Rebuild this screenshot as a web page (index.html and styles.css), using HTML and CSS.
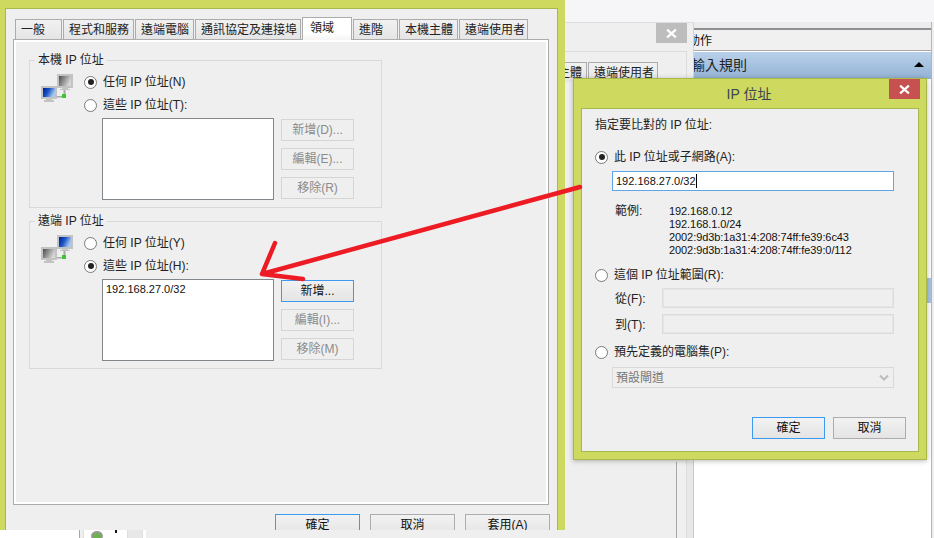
FILE: index.html
```html
<!DOCTYPE html>
<html lang="zh-Hant">
<head>
<meta charset="utf-8">
<title>IP 位址</title>
<link rel="stylesheet" href="styles.css">
</head>
<body>
<div class="desk">
  <div class="topband"></div>

  <div class="peek">
    <div class="peek-white"></div>
    <div class="peek-list"><span class="peek-dot"></span><span class="peek-tick"></span></div>
    <div class="peek-gutter"></div>
    <div class="peek-white2"></div>
  </div>

  <div class="splitter"><div class="split-a"></div><div class="split-b"></div></div>

  <aside class="actions">
    <div class="act-strip"></div>
    <div class="act-head"><span class="act-head-text">動作</span></div>
    <div class="act-sect"><span class="act-sect-text">輸入規則</span><span class="act-tri"></span></div>
    <div class="act-body"><div class="act-thumb"></div></div>
  </aside>

  <section class="midwin">
    <div class="mid-title"><span class="mid-close"><svg class="x-icon" viewBox="0 0 10 10"><path d="M1 1.5 9 8.5M9 1.5 1 8.5"/></svg></span></div>
    <div class="mid-client">
      <div class="mid-tabs">
        <div class="tab mid-tab1">本機主體</div>
        <div class="tab mid-tab2">遠端使用者</div>
      </div>
    </div>
  </section>

  <section class="mainwin">
    <div class="main-client">
      <div class="tabs">
        <div class="tab">一般</div>
        <div class="tab">程式和服務</div>
        <div class="tab">遠端電腦</div>
        <div class="tab">通訊協定及連接埠</div>
        <div class="tab tab-on">領域</div>
        <div class="tab">進階</div>
        <div class="tab">本機主體</div>
        <div class="tab">遠端使用者</div>
      </div>
      <div class="pane">
        <fieldset class="group">
          <legend class="legend">本機 IP 位址</legend>
          <div class="group-row">
            <svg class="net" viewBox="0 0 32 30">
              <defs>
                <linearGradient id="grad-gray" x1="0" y1="0" x2="1" y2="0.4"><stop offset="0" stop-color="#4c4c4c"/><stop offset="1" stop-color="#d6d6d6"/></linearGradient>
                <linearGradient id="grad-blue" x1="0" y1="0" x2="1" y2="0.4"><stop offset="0" stop-color="#001c96"/><stop offset="0.5" stop-color="#1b55c4"/><stop offset="1" stop-color="#a9c6ee"/></linearGradient>
              </defs>
              <rect class="frame" x="16" y="0" width="16" height="14"/><rect class="scr-gray" x="18" y="2" width="12" height="10"/>
              <rect class="frame" x="21" y="14" width="6" height="1"/><rect class="frame" x="19" y="15" width="10" height="1"/>
              <rect class="wire" x="22.5" y="16" width="2" height="5"/><rect class="wire" x="16" y="22" width="6" height="1.5"/>
              <rect class="frame" x="0" y="12" width="16" height="13"/><rect class="scr-blue" x="2" y="14" width="12" height="9"/>
              <rect class="frame" x="5" y="25" width="6" height="1"/><rect class="frame" x="3" y="26" width="10" height="2"/>
              <rect class="led" x="21" y="20" width="4" height="4"/>
            </svg>
            <div class="opts">
              <div class="radio-row"><span class="radio radio-on"></span><span>任何 IP 位址(N)</span></div>
              <div class="radio-row"><span class="radio"></span><span>這些 IP 位址(T):</span></div>
              <div class="list-row">
                <div class="listbox"></div>
                <div class="btn-col">
                  <div class="btn btn-off">新增(D)...</div>
                  <div class="btn btn-off">編輯(E)...</div>
                  <div class="btn btn-off">移除(R)</div>
                </div>
              </div>
            </div>
          </div>
        </fieldset>
        <fieldset class="group group-remote">
          <legend class="legend">遠端 IP 位址</legend>
          <div class="group-row">
            <svg class="net" viewBox="0 0 32 30">
              <rect class="frame" x="16" y="0" width="16" height="14"/><rect class="scr-blue" x="18" y="2" width="12" height="10"/>
              <rect class="frame" x="21" y="14" width="6" height="1"/><rect class="frame" x="19" y="15" width="10" height="1"/>
              <rect class="wire" x="22.5" y="16" width="2" height="5"/><rect class="wire" x="16" y="22" width="6" height="1.5"/>
              <rect class="frame" x="0" y="12" width="16" height="13"/><rect class="scr-gray" x="2" y="14" width="12" height="9"/>
              <rect class="frame" x="5" y="25" width="6" height="1"/><rect class="frame" x="3" y="26" width="10" height="2"/>
              <rect class="led" x="21" y="20" width="4" height="4"/>
            </svg>
            <div class="opts">
              <div class="radio-row"><span class="radio"></span><span>任何 IP 位址(Y)</span></div>
              <div class="radio-row"><span class="radio radio-on"></span><span>這些 IP 位址(H):</span></div>
              <div class="list-row">
                <div class="listbox"><span class="ip-text">192.168.27.0/32</span></div>
                <div class="btn-col">
                  <div class="btn btn-focus">新增...</div>
                  <div class="btn btn-off">編輯(I)...</div>
                  <div class="btn btn-off">移除(M)</div>
                </div>
              </div>
            </div>
          </div>
        </fieldset>
      </div>
      <div class="main-actions">
        <div class="btn btn-w85 btn-focus">確定</div>
        <div class="btn btn-w85 btn-norm">取消</div>
        <div class="btn btn-w85 btn-norm">套用(A)</div>
      </div>
    </div>
  </section>

  <section class="ipwin">
    <header class="ip-title"><span>IP 位址</span><span class="ip-close"><svg class="x-icon" viewBox="0 0 10 10"><path d="M1 1.5 9 8.5M9 1.5 1 8.5"/></svg></span></header>
    <div class="ip-client">
      <div class="ip-lead">指定要比對的 IP 位址:</div>
      <div class="radio-row r-first"><span class="radio radio-on"></span><span>此 IP 位址或子網路(A):</span></div>
      <div class="ip-input"><span class="ip-text">192.168.27.0/32</span><span class="caret"></span></div>
      <div class="examples">
        <div class="ex-label">範例:</div>
        <div class="ex-list ip-text">
          <div>192.168.0.12</div>
          <div>192.168.1.0/24</div>
          <div>2002:9d3b:1a31:4:208:74ff:fe39:6c43</div>
          <div>2002:9d3b:1a31:4:208:74ff:fe39:0/112</div>
        </div>
      </div>
      <div class="radio-row r-range"><span class="radio"></span><span>這個 IP 位址範圍(R):</span></div>
      <div class="range-row"><span class="range-label">從(F):</span><span class="range-input"></span></div>
      <div class="range-row"><span class="range-label">到(T):</span><span class="range-input"></span></div>
      <div class="radio-row r-pre"><span class="radio"></span><span>預先定義的電腦集(P):</span></div>
      <div class="select"><span>預設閘道</span><svg class="chev" viewBox="0 0 10 8"><path d="M1 1.5 5 5.5 9 1.5"/></svg></div>
      <div class="ip-actions">
        <div class="btn btn-focus">確定</div>
        <div class="btn btn-norm">取消</div>
      </div>
    </div>
  </section>

  <svg class="arrow" viewBox="0 0 934 538">
    <path d="M580 187 262 274M275 243 262 274 303 279"/>
  </svg>
</div>
</body>
</html>
```
FILE: styles.css
```css
* { box-sizing: border-box; }
html, body { margin: 0; padding: 0; }
body { background: #efefef; }
.desk {
  position: relative;
  width: 934px;
  height: 538px;
  overflow: hidden;
  background: #efefef;
  font: 12px/16px "Liberation Sans", "Noto Sans CJK TC", sans-serif;
  color: #111;
}

/* background strips */
.topband { position: absolute; left: 565px; top: 0; width: 369px; height: 22px; background: #f6f6f8; }
.peek { position: absolute; left: 0; top: 530px; width: 146px; height: 8px; display: flex; }
.peek-white { width: 80px; background: #fff; border-right: 1px solid #a8a8a8; }
.peek-list { background: #fff; border-left: 1px solid #ddd; margin-left: 3px; position: relative; overflow: hidden; width: 44px; }
.peek-dot { position: absolute; left: 7px; top: 1px; width: 12px; height: 10px; border-radius: 50%; background: #6bb34a; border: 2px solid #999; }
.peek-tick { position: absolute; left: 31px; top: 0; width: 2px; height: 3px; background: #111; }
.peek-gutter { width: 16px; background: #e8e8e8; border-left: 1px solid #ddd; border-right: 1px solid #ddd; }
.peek-white2 { width: 3px; background: #fff; }

.splitter { position: absolute; left: 676px; top: 450px; width: 18px; height: 88px; display: flex; }
.split-a { width: 10px; background: #f0f0f0; border-left: 1px solid #a8a8a8; }
.split-b { width: 8px; background: #e8e8e8; border-left: 1px solid #dcdcdc; border-right: 1px solid #c8c8c8; }

/* actions pane */
.actions { position: absolute; left: 694px; top: 22px; width: 238px; height: 516px; display: flex; flex-direction: column; background: #fff; border-right: 1px solid #b5b5b5; }
.act-strip { height: 8px; background: #ececee; border-bottom: 2px solid #8f8f8f; }
.act-head { height: 21px; background: #f0f0f0; border-bottom: 1px solid #a9a9a9; overflow: hidden; line-height: 21px; padding-top: 1px; }
.act-head-text { display: block; margin-left: -6px; }
.act-sect { height: 27px; margin-top: 1px; flex: none; display: flex; justify-content: space-between; align-items: center; padding-right: 7px; background: linear-gradient(#b9d1ea, #93b2d5); overflow: hidden; }
.act-sect-text { font-size: 14px; margin: 0 0 2px -3px; color: #222; }
.act-tri { width: 0; height: 0; border-left: 5px solid transparent; border-right: 5px solid transparent; border-bottom: 5px solid #000; margin-bottom: 3px; }
.act-body { flex: 1; position: relative; }
.act-thumb { position: absolute; right: 0; top: 199px; width: 5px; height: 25px; background: #a9c4e2; }

/* middle dialog */
.midwin { position: absolute; left: 565px; top: 22px; width: 129px; height: 440px; background: #efefef; border-right: 1px solid #d4d4d4; border-top: 1px solid #dedede; }
.mid-title { height: 28px; display: flex; justify-content: flex-end; padding-right: 6px; }
.mid-close { width: 31px; height: 20px; background: #bdbdbd; display: flex; align-items: center; justify-content: center; }
.x-icon { width: 11px; height: 11px; fill: none; stroke: #fff; stroke-width: 2; }
.mid-client { width: 122px; height: 100%; border-top: 1px solid #dcdcdc; border-right: 1px solid #dcdcdc; padding-top: 10px; overflow: hidden; }
.mid-tabs { display: flex; justify-content: flex-end; gap: 1px; height: 20px; padding-right: 28px; }
.mid-tab1 { flex: 0 0 59px; }
.mid-tab2 { flex: 0 0 70px; }

/* main window */
.mainwin { position: absolute; left: 0; top: 0; width: 565px; height: 530px; overflow: hidden; background: #cdd95f; padding: 8px 7px 0 5px; }
.main-client { height: 530px; background: #efefef; border: 1px solid #a9b84a; border-bottom: 0; padding: 10px 7px 0 7px; }
.tabs { display: grid; grid-template-columns: 47px 71px 59px 106px 50px 45px 59px 69px; gap: 1px; height: 20px; margin-left: 2px; }
.tab {
  display: flex; align-items: center; justify-content: flex-start;
  padding-left: 5px;
  background: linear-gradient(#f1f1f1, #e5e5e5);
  border: 1px solid #acacac; border-bottom: 0;
  white-space: nowrap;
  color: #222;
}
.tab-on { position: relative; z-index: 1; margin: -2px 0 -1px; height: 23px; padding-left: 7px; background: linear-gradient(#fff, #fff 70%, #f4f4f4); padding-bottom: 3px; }
.pane { height: 466px; width: 536px; background: #efefef; border: 1px solid #acacac; box-shadow: inset 0 0 0 2px #fff; padding: 12px 15px 0; }
.group { margin: 0; padding: 6px 0 0 11px; width: 353px; height: 156px; border: 1px solid #d9d9d9; min-width: 0; }
.group-remote { margin-top: 5px; }
.legend { padding: 0 3px; margin-left: -6px; line-height: 16px; color: #222; }
.group-row { display: flex; align-items: flex-start; gap: 11px; }
.net { width: 32px; height: 30px; flex: none; }
.frame { fill: #c3c3c3; }
.wire { fill: #a9a9a9; }
.scr-gray { fill: url(#grad-gray); }
.scr-blue { fill: url(#grad-blue); }
.led { fill: #3fc62f; }
.opts { display: flex; flex-direction: column; gap: 7px; }
.radio-row { display: flex; align-items: center; gap: 6px; height: 16px; white-space: nowrap; color: #222; }
.radio { flex: none; width: 13px; height: 13px; border-radius: 50%; border: 1px solid #7a7a7a; background: #fff; display: flex; align-items: center; justify-content: center; }
.radio-on::after { content: ""; width: 6px; height: 6px; border-radius: 50%; background: #222; }
.list-row { display: flex; gap: 7px; margin: -2px 0 0 18px; align-items: flex-start; }
.listbox { width: 172px; height: 82px; background: #fff; border: 1px solid #82878c; padding: 1px 3px; }
.ip-text { font-size: 11px; color: #111; }
.btn-col { display: flex; flex-direction: column; gap: 7px; padding-top: 1px; }
.btn { width: 73px; height: 21px; display: flex; align-items: center; justify-content: center; white-space: nowrap; flex: none; }
.btn-off { height: 22px; border: 1px solid #d5d5d5; background: #efefef; color: #8b8b8b; }
.btn-focus { height: 22px; border: 1px solid #3c9bf0; background: linear-gradient(#f2f2f2, #e4e4e4); color: #111; }
.btn-norm { height: 22px; border: 1px solid #adadad; background: linear-gradient(#f2f2f2, #e4e4e4); color: #111; }
.btn-w85 { width: 85px; }
.main-actions { display: flex; justify-content: flex-end; gap: 10px; margin-top: 9px; width: 537px; }

/* IP dialog */
.ipwin { position: absolute; left: 573px; top: 78px; width: 354px; height: 382px; background: #cdd95f; border: 1px solid #a9b84a; padding: 0 7px 7px; box-shadow: 0 1px 5px rgba(0,0,0,.28); display: flex; flex-direction: column; }
.ip-title { position: relative; height: 29px; flex: none; display: flex; align-items: center; justify-content: center; font-size: 14px; color: #3a4450; padding: 1px 2px 0 0; }
.ip-close { position: absolute; right: -1px; top: 0; width: 31px; height: 20px; background: #c75050; display: flex; align-items: center; justify-content: center; }
.ip-client { flex: 1; background: #efefef; border: 1px solid #a9b84a; padding: 8px 12px 0 13px; display: flex; flex-direction: column; }
.ip-lead { height: 16px; color: #222; }
.r-first { margin-top: 16px; }
.ip-input { margin: 6px 0 0 17px; width: 282px; height: 20px; background: #fff; border: 1px solid #5ea6e6; display: flex; align-items: center; padding-left: 3px; flex: none; }
.caret { width: 1px; height: 14px; background: #000; }
.examples { display: flex; margin: 14px 0 0 20px; }
.ex-label { width: 54px; line-height: 13px; color: #222; }
.ex-list { line-height: 13px; letter-spacing: -0.08px; }
.r-range { margin-top: 10px; }
.range-row { display: flex; align-items: flex-start; margin: 5px 0 0 20px; height: 20px; color: #222; }
.range-row + .range-row { margin-top: 6px; }
.range-label { width: 47px; padding-top: 3px; }
.range-input { width: 232px; height: 20px; border: 1px solid #dcdcdc; box-shadow: inset 0 0 0 1px #e6e6e6; background: #efefef; }
.r-pre { margin-top: 10px; }
.select { margin: 7px 0 0 17px; width: 282px; height: 21px; border: 1px solid #d9d9d9; display: flex; align-items: center; justify-content: space-between; padding: 0 4px 0 3px; color: #777; flex: none; }
.chev { width: 10px; height: 8px; fill: none; stroke: #bcbcbc; stroke-width: 2; }
.ip-actions { display: flex; justify-content: flex-end; gap: 8px; margin-top: 29px; }

/* annotation */
.arrow { position: absolute; left: 0; top: 0; width: 934px; height: 538px; fill: none; stroke: #ed1c24; stroke-width: 4.5; stroke-linecap: round; stroke-linejoin: round; pointer-events: none; }
```
